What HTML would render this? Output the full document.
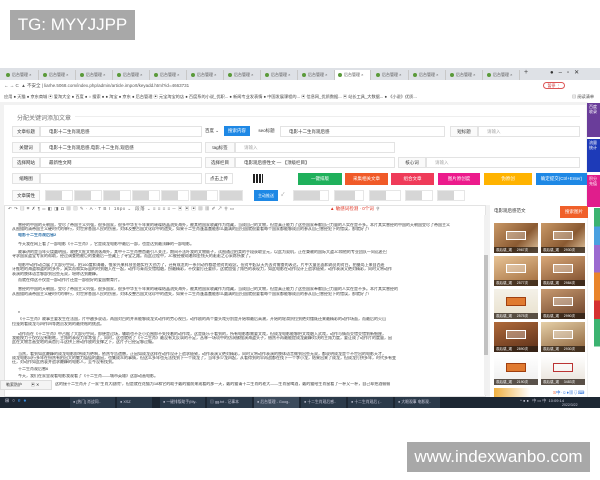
<!DOCTYPE html>
<html><head><meta charset="utf-8">
<style>
*{margin:0;padding:0;box-sizing:border-box}
body{width:600px;height:480px;background:#fff;position:relative;overflow:hidden;font-family:"Liberation Sans","Noto Sans CJK SC",sans-serif}
.a{position:absolute}
.wm{background:#a8a8a8;color:#fff;font-size:17px;display:flex;align-items:center;justify-content:center}
.tab{position:absolute;top:70px;height:10px;width:36px;font-size:4px;color:#555;padding-left:3px;line-height:10px;border-right:1px solid #c8c8c8}
.tab i{display:inline-block;width:4px;height:4px;border-radius:50%;background:#5a9a3a;margin-right:2px;vertical-align:-0.5px}
.lab{position:absolute;height:11px;border:1px solid #e3e3e3;background:#fafafa;font-size:4.5px;color:#333;text-align:center;line-height:9px}
.inp{position:absolute;height:11px;border:1px solid #e3e3e3;background:#fff;font-size:4.5px;color:#333;line-height:9px;padding-left:8px}
.btn{position:absolute;top:173px;height:12px;font-size:4.5px;color:#fff;text-align:center;line-height:12px}
.at{position:absolute;top:190px;height:11px;width:28px;border:1px solid #e6e6e6;background:#fff}
.at b{display:block;width:16px;height:9px;background:#d6d6d6}
.l{position:absolute;height:4.4px;font-size:4px;line-height:4.4px;color:#3a3a3a;white-space:nowrap;overflow:hidden}
.img{position:absolute;width:44px;height:30px;background:linear-gradient(135deg,#c99866,#8a5a32 60%,#e3c8a2);}
.img span{position:absolute;bottom:0;left:0;right:0;height:6px;background:rgba(40,30,20,.75);font-size:3.5px;color:#fff;line-height:6px;padding-left:2px}
.img em{position:absolute;left:12px;top:8px;width:20px;height:9px;border:1px solid #fff;background:rgba(255,255,255,.3)}
</style></head><body>
<div class="a wm" style="left:10px;top:10px;width:125px;height:30px">TG: MYYJJPP</div>
<div class="a wm" style="left:407px;top:442px;width:183px;height:30px">www.indexwanbo.com</div>

<div class="a" style="left:0;top:68px;width:600px;height:14px;background:#dee1e6"></div>
<div class="tab" style="left:3px"><i></i>后台管理 ×</div><div class="tab" style="left:40px"><i></i>后台管理 ×</div>
<div class="tab" style="left:77px"><i></i>后台管理 ×</div><div class="tab" style="left:114px"><i></i>后台管理 ×</div>
<div class="tab" style="left:151px"><i></i>后台管理 ×</div><div class="tab" style="left:188px"><i></i>后台管理 ×</div>
<div class="tab" style="left:225px"><i></i>后台管理 ×</div><div class="tab" style="left:262px"><i></i>后台管理 ×</div>
<div class="tab" style="left:299px"><i></i>后台管理 ×</div>
<div class="tab" style="left:335px;background:#fff"><i></i>后台管理 ×</div>
<div class="tab" style="left:373px"><i></i>后台管理 ×</div><div class="tab" style="left:410px"><i></i>后台管理 ×</div>
<div class="tab" style="left:447px"><i></i>后台管理 ×</div><div class="tab" style="left:484px"><i></i>后台管理 ×</div>
<div class="a" style="left:524px;top:69px;font-size:7px;color:#444">+</div>
<div class="a" style="left:550px;top:69px;font-size:6px;color:#333">●&nbsp;&nbsp;&nbsp;–&nbsp;&nbsp;&nbsp;▫&nbsp;&nbsp;&nbsp;✕</div>
<div class="a" style="left:0;top:80px;width:600px;height:22px;background:#fff"></div>
<div class="a" style="left:4px;top:83px;font-size:4.5px;color:#555;white-space:nowrap">← → C &nbsp;▲ 不安全 | liarhe.5068.com/index.php/admin/article.import/keyadd.html?id=4663731</div>
<div class="a" style="left:543px;top:82px;width:22px;height:7px;border:1px solid #d55;border-radius:4px;font-size:4px;color:#c33;text-align:center;line-height:5px">暂停 ⋮</div>
<div class="a" style="left:4px;top:94px;font-size:4.2px;color:#444;white-space:nowrap">应用 ● 天猫 ● 京东商城 ▣ 爱淘大全 ● 百度 ● ○ 搜索 ● ● 淘宝 ● 京东 ● 后台管理 ▣ 元宝淘宝的店 ● 百度系的小说_优职... ● 新闻专业发表情 ● 中国发展课程的... ▣ 信息网_优质数据... ▣ 站长工具_大数据... ● 《小说》优质...</div>
<div class="a" style="left:572px;top:94px;font-size:4.2px;color:#444">▤ 阅读清单</div>

<div class="a" style="left:0;top:102px;width:588px;height:295px;background:#f2f2f2"></div>
<div class="a" style="left:4px;top:105px;width:582px;height:100px;background:#fff"></div>
<div class="a" style="left:17px;top:113px;font-size:6px;color:#777">分配关键词添加文章</div>
<div class="a" style="left:75px;top:116px;width:505px;height:1px;background:#eee"></div>

<div class="lab" style="left:12px;top:126px;width:28px">文章标题</div>
<div class="inp" style="left:40px;top:126px;width:162px">电影十二生肖观后感</div>
<div class="a" style="left:205px;top:128px;font-size:4.5px;color:#333">百度 ⌄</div>
<div class="a" style="left:224px;top:126px;width:26px;height:10px;background:#1e88e5;color:#fff;font-size:4.5px;text-align:center;line-height:10px">搜索内容</div>
<div class="lab" style="left:253px;top:126px;width:27px;background:#fff;border:none">seo标题</div>
<div class="inp" style="left:280px;top:126px;width:165px">电影十二生肖观后感</div>
<div class="lab" style="left:450px;top:126px;width:28px">短标题</div>
<div class="inp" style="left:478px;top:126px;width:102px;color:#aaa">请输入</div>

<div class="lab" style="left:12px;top:142px;width:28px">关键词</div>
<div class="inp" style="left:40px;top:142px;width:162px">电影十二生肖观后感,电影,十二生肖,观后感</div>
<div class="lab" style="left:205px;top:142px;width:30px">tag标签</div>
<div class="inp" style="left:235px;top:142px;width:160px;color:#aaa">请输入</div>

<div class="lab" style="left:12px;top:157px;width:28px">选择网站</div>
<div class="inp" style="left:40px;top:157px;width:162px">最新性文网</div>
<div class="lab" style="left:205px;top:157px;width:30px">选择栏目</div>
<div class="inp" style="left:235px;top:157px;width:160px">电影观后感性文 — 【顶级栏目】</div>
<div class="lab" style="left:398px;top:157px;width:28px">核心词</div>
<div class="inp" style="left:426px;top:157px;width:154px;color:#aaa">请输入</div>

<div class="lab" style="left:12px;top:173px;width:28px">缩略图</div>
<div class="inp" style="left:40px;top:173px;width:162px"></div>
<div class="lab" style="left:205px;top:173px;width:28px;background:#fff">点击上传</div>
<div class="a" style="left:253px;top:174px;width:10px;height:9px;background:repeating-linear-gradient(90deg,#222 0 2px,#fff 2px 3px)"></div>
<div class="btn" style="left:298px;width:44px;background:#1fb05b">一键排版</div>
<div class="btn" style="left:345px;width:43px;background:#f05a28">采集相关文章</div>
<div class="btn" style="left:391px;width:43px;background:#ef3b59">组合文章</div>
<div class="btn" style="left:438px;width:42px;background:#ec1b8c">图片原创度</div>
<div class="btn" style="left:484px;width:48px;background:#ffb300">伪原创</div>
<div class="btn" style="left:536px;width:51px;background:#1e88e5">确定提交(Ctrl+Enter)</div>

<div class="lab" style="left:12px;top:190px;width:28px">文章属性</div>
<div class="at" style="left:45px"><b></b></div><div class="at" style="left:74px"><b></b></div>
<div class="at" style="left:103px"><b></b></div><div class="at" style="left:132px"><b></b></div>
<div class="at" style="left:161px"><b></b></div><div class="at" style="left:190px"><b></b></div>
<div class="at" style="left:219px;width:24px"><b style="width:22px"></b></div>
<div class="a" style="left:254px;top:190px;width:24px;height:11px;background:#1e88e5;color:#fff;font-size:4px;text-align:center;line-height:11px">主动推送</div>
<div class="a" style="left:281px;top:191px;font-size:5px;color:#888">✓</div>
<div class="at" style="left:293px;width:36px"><b style="width:26px"></b></div>
<div class="at" style="left:334px;width:30px"><b style="width:20px"></b></div>
<div class="at" style="left:369px;width:32px"><b></b></div>
<div class="at" style="left:405px;width:28px"><b></b></div>
<div class="at" style="left:437px;width:28px"><b></b></div>

<div class="a" style="left:4px;top:205px;width:482px;height:192px;background:#fff;border:1px solid #e3e3e3"></div>
<div class="a" style="left:8px;top:206px;font-size:4.5px;color:#666;white-space:nowrap;letter-spacing:.5px">↶ ↷ ▤ ⌗ ✗ ¶ ═ ◧ ◨ Ω ▦ ▥ ✎ · A · Ƭ B I &nbsp;16px ⌄ &nbsp;段落 ⌄ ≡ ≡ ≡ ≡ ─ ▣ ▣ ▣ ▦ ▦ ✐ ↗ ⚲ ▭ </div>
<div class="a" style="left:330px;top:206px;font-size:4.5px;color:#d32;white-space:nowrap">▲ 敏感词检测 · 0个词 &nbsp;<span style="color:#666">⚲</span></div>
<div class="a" style="left:484px;top:215px;width:4px;height:180px;background:#f1f1f1"></div>
<div class="a" style="left:484px;top:255px;width:4px;height:100px;background:#c1c1c1"></div>

<div class="l" style="left:18px;top:223px;width:462px">曾经的中国的天朝国，受尽了帝国主义列强，很多国家，很多中华五千年来的璀璨结晶流失海外，被其他国家收藏作为馆藏，当成自己的文物，但是真正能力了这些国家奉献自己力量的人实在是不多。本片其实曾经的中国的天朝国受尽了帝国主义</div>
<div class="l" style="left:12px;top:227px;width:458px">从图描的清帝国主义硬时代的罪行，对世界各国人民的伤害，对体及整古国文化珍中的遗失，如果十二生肖蓬喜蠢能那么圆满的回归国就很要看每个国家都能够成员的参从自己曾经犯下的错误，那就好了!</div>
<div class="l" style="left:18px;top:233px;width:70px;color:#2a6fa8;font-weight:bold">电影十二生肖观后感2</div>
<div class="l" style="left:18px;top:242px;width:212px">今天我在网上看了一部电影《十二生肖》，它是成龙电影中最后一部，也是达到最顶峰的一部电影。</div>
<div class="l" style="left:18px;top:250px;width:462px">故事讲的是当年火烧圆明园，故使大批文物流落海外，其中十二生肖兽首最引人关注，期间不法吁我的文物贩子，试图通过拍卖的手段获取全元，以此为契机，正在秉赖的国际大盗JC和他的专业团队一同远赴巴</div>
<div class="l" style="left:12px;top:254px;width:390px">寻求国家盗宝专家的帮助，经过调查他被巨的查最后一些藏上了寻宝之路。而此过程中，JC被经被劫着和金钱天的驱驱之心采炼所蒙了。</div>
<div class="l" style="left:18px;top:263px;width:462px">电影中动作动点展了大部分空间，拍160度和海最，惟荣光果科技金融实在大劲力了，还有成龙的一系列动作都是他对的观念，但对中起从天先去对需查的表达，片中大量出面和两员的对白，拍摄岛上来自西班</div>
<div class="l" style="left:12px;top:267px;width:468px">牙惟地的海盗和盗的的多外，具实而和实际虽的时到融入在一起，动作与青而交错相融，扮最精彩，不仅要打还要炒，这就加强了角色的表现力，如此电影在动作设计上追求极致，动作表演又绝对精彩，同时又将动作</div>
<div class="l" style="left:12px;top:272px;width:102px">表演的肢体语言够部到出些无双，堪称达到巅峰。</div>
<div class="l" style="left:18px;top:278px;width:128px">而就在得这不仅是一部动作片还是一部很好的爱国教育片。</div>
<div class="l" style="left:18px;top:287px;width:462px">曾经的中国的天朝国，受尽了帝国主义列强，很多国家，很多中华五千年来的璀璨结晶流失海外，被其他国家收藏作为馆藏，当成自己的文物，但是真正能力了这些国家奉献自己力量的人实在是不多。本片其实曾经的</div>
<div class="l" style="left:12px;top:292px;width:458px">从图描的清帝国主义硬时代的罪行，对世界各国人民的伤害，对体及整古国文化珍中的遗失，如果十二生肖蓬喜蠢能那么圆满的回归国就很要看每个国家都能够成员的参从自己曾经犯下的错误，那就好了!</div>
<div class="l" style="left:18px;top:310px;width:6px">v</div>
<div class="l" style="left:18px;top:317px;width:462px">《十二生肖》故事主要发生在法国，片中越多说语，两国对白的并未能够成龙式动作的劳心视目，动作剧的两个重头戏分别是开始和最后高潮，开始的轮滑贸拉到绝对懂既还来最精彩的动作场面，而最后的火山</div>
<div class="l" style="left:12px;top:322px;width:186px">拉笼刻看成龙与四作四等跑员发刻的最终格的挑战。</div>
<div class="l" style="left:18px;top:332px;width:462px">动作而在《十二生肖》中占据了大部分空间，即便是过场，辅助也不乏小范围即不失技着的动作戏，这是既乐于看到的，所有电影都需要文戏，但成龙电影能够把文戏融入武戏，动作与情而交错交错划新细座，</div>
<div class="l" style="left:12px;top:336px;width:468px">我能按力于仅仅没有眼眩，主角的表现力非常强了，同时，这也就给了《十二生肖》最没有太反讽的不足，丛林一场项中的彷洞佛抛演海盗头子，借然不再最能提成龙颠峰对决的主角力度，要让成了动作片的度量，因</div>
<div class="l" style="left:12px;top:340px;width:160px">此在文物言画受地的高首打斗这拼上原动作放的支撑之下，这片子已经足够过瘾。</div>
<div class="l" style="left:18px;top:352px;width:462px">当然，看到如此巅峰的成龙电影即将成为绝响，依然令告遗憾，正因如成龙这样在动作设计上追求极致，动作表演又绝对精彩，同时又将动作表演的肢体语言做到出些无双，都说明成龙是个不世出的电影天才，</div>
<div class="l" style="left:12px;top:356px;width:468px">成龙电影风行多年在纷然有拍出大的魅力值值的圆因，也集成众的事情，但这么多年也无法找到下一个成龙了，当年多少龙四起，从看得到的早再战都在找下一个李小龙，结果出来了成龙，但成龙打拼多年，时代多有变</div>
<div class="l" style="left:12px;top:360px;width:155px">迁，对动作如此热衷并追求巅峰的电影人，至今没有找到。</div>
<div class="l" style="left:18px;top:367px;width:50px">十二生肖观后感6</div>
<div class="l" style="left:18px;top:374px;width:180px">今天，我们在家里观看电影我观看了《十二生肖——城市英雄》这部动画电影。</div>
<div class="l" style="left:55px;top:382px;width:425px">这的接十二生肖开了一家"生肖大剧院"，但是就在花猫为18和它的助手戴的猫前来观看的那一天，戴的猫请十二生肖的老大——生肖鼠喝酒，戴的猫给生肖鼠看了一杯又一杯，自己却把酒偷偷</div>
<div class="a" style="left:0;top:380px;width:52px;height:10px;background:#f4f4f4;border:1px solid #ddd;font-size:4px;color:#333;line-height:8px;padding-left:5px">勒索防护&nbsp;&nbsp;&nbsp;&nbsp;&nbsp;&nbsp;&nbsp;&nbsp;▣ ✕</div>

<div class="a" style="left:490px;top:205px;width:97px;height:192px;background:#fff"></div>
<div class="a" style="left:494px;top:208px;font-size:4.5px;color:#333">电影观后感范文</div>
<div class="a" style="left:560px;top:206px;width:28px;height:12px;background:#f0602a;color:#fff;font-size:4.5px;text-align:center;line-height:12px">搜索图片</div>
<div class="img" style="left:494px;top:223px"><em></em><span>观后感_观 &nbsp; &nbsp; 2967次</span></div>
<div class="img" style="left:541px;top:223px"><em></em><span>观后感_观 &nbsp; &nbsp; 2930次</span></div>
<div class="img" style="left:494px;top:256px;background:linear-gradient(160deg,#e8c496,#a06a3a)"><em></em><span>观后感_观 &nbsp; &nbsp; 2577次</span></div>
<div class="img" style="left:541px;top:256px;background:linear-gradient(160deg,#d9a878,#7a4a2a)"><em></em><span>观后感_观 &nbsp; &nbsp; 2984次</span></div>
<div class="img" style="left:494px;top:289px;background:linear-gradient(180deg,#f4f1e8,#e8e0cc)"><em style="background:#e07a30;border-color:#a04010"></em><span>观后感_观 &nbsp; &nbsp; 2575次</span></div>
<div class="img" style="left:541px;top:289px;background:linear-gradient(160deg,#c89a70,#6a4028)"><em></em><span>观后感_观 &nbsp; &nbsp; 2990次</span></div>
<div class="img" style="left:494px;top:322px;background:linear-gradient(160deg,#b06a3a,#5a2e18)"><em></em><span>观后感_观 &nbsp; &nbsp; 2890次</span></div>
<div class="img" style="left:541px;top:322px;background:linear-gradient(160deg,#e6d0a8,#8a6038)"><em></em><span>观后感_观 &nbsp; &nbsp; 2930次</span></div>
<div class="img" style="left:494px;top:355px;background:linear-gradient(180deg,#fff,#eee)"><em style="background:#e07a30;border-color:#a04010"></em><span>观后感_观 &nbsp; &nbsp; 2190次</span></div>
<div class="img" style="left:541px;top:355px;background:linear-gradient(180deg,#fff,#e8e2da)"><em style="border-color:#b33"></em><span>观后感_观 &nbsp; &nbsp; 3483次</span></div>
<div class="a" style="left:494px;top:388px;width:91px;height:9px;background:linear-gradient(90deg,#f0b040,#fff 40%)"></div>
<div class="a" style="left:553px;top:390px;font-size:4.5px;color:#2a6fd8;white-space:nowrap"><span style="color:#f05a28">S</span>中·☺♦▦⇩⌨</div>

<div class="a" style="left:587px;top:103px;width:13px;height:34px;background:#6a3d9a"></div>
<div class="a" style="left:587px;top:139px;width:13px;height:33px;background:#1d3ab8"></div>
<div class="a" style="left:587px;top:175px;width:13px;height:32px;background:#e01e8c"></div>
<div class="a" style="left:594px;top:208px;width:6px;height:185px;background:linear-gradient(180deg,#3cb371 0 10%,#4aa0e0 10% 20%,#9b6ad0 20% 35%,#e9842a 35% 50%,#d53030 50% 60%,#3cb371 60% 75%,#fff 75%)"></div>
<div class="a" style="left:588px;top:104px;font-size:4px;color:#fff;line-height:5px;width:10px;text-align:center">百度收录</div>
<div class="a" style="left:588px;top:140px;font-size:4px;color:#fff;line-height:5px;width:10px;text-align:center">流量统计</div>
<div class="a" style="left:588px;top:176px;font-size:4px;color:#fff;line-height:5px;width:10px;text-align:center">积分充值</div>

<div class="a" style="left:0;top:397px;width:600px;height:11px;background:#1d2733"></div>
<div class="a" style="left:5px;top:398px;font-size:5px;color:#dde;white-space:nowrap">⊞ &nbsp;○ &nbsp;<span style="color:#3a8ee0">e</span> &nbsp;<span style="color:#3a8ee0">●</span></div>
<div class="a" style="left:70px;top:397px;width:45px;height:11px;background:#2b3a4a;font-size:3.8px;color:#ccd;line-height:11px;padding-left:3px">● [热门] 肖战同..</div>
<div class="a" style="left:117px;top:397px;width:35px;height:11px;background:#2b3a4a;font-size:3.8px;color:#ccd;line-height:11px;padding-left:3px">● XSZ</div>
<div class="a" style="left:160px;top:397px;width:45px;height:11px;background:#2b3a4a;font-size:3.8px;color:#ccd;line-height:11px;padding-left:3px">● 一键排版助手(My..</div>
<div class="a" style="left:207px;top:397px;width:45px;height:11px;background:#2b3a4a;font-size:3.8px;color:#ccd;line-height:11px;padding-left:3px">▤ gg.txt - 记事本</div>
<div class="a" style="left:254px;top:397px;width:45px;height:11px;background:#3c4b5c;font-size:3.8px;color:#ccd;line-height:11px;padding-left:3px">● 后台管理 - Goog..</div>
<div class="a" style="left:301px;top:397px;width:45px;height:11px;background:#2b3a4a;font-size:3.8px;color:#ccd;line-height:11px;padding-left:3px">● 十二生肖观后感..</div>
<div class="a" style="left:348px;top:397px;width:45px;height:11px;background:#2b3a4a;font-size:3.8px;color:#ccd;line-height:11px;padding-left:3px">● 十二生肖观后 (..</div>
<div class="a" style="left:395px;top:397px;width:45px;height:11px;background:#2b3a4a;font-size:3.8px;color:#ccd;line-height:11px;padding-left:3px">● 大眼观事 电影观..</div>
<div class="a" style="left:520px;top:398px;font-size:4px;color:#ccd;white-space:nowrap">^ ● ● &nbsp; 中 ▭ 中 &nbsp;10:09:14</div>
<div class="a" style="left:562px;top:403px;font-size:3.5px;color:#ccd">2022/3/22</div>
</body></html>
